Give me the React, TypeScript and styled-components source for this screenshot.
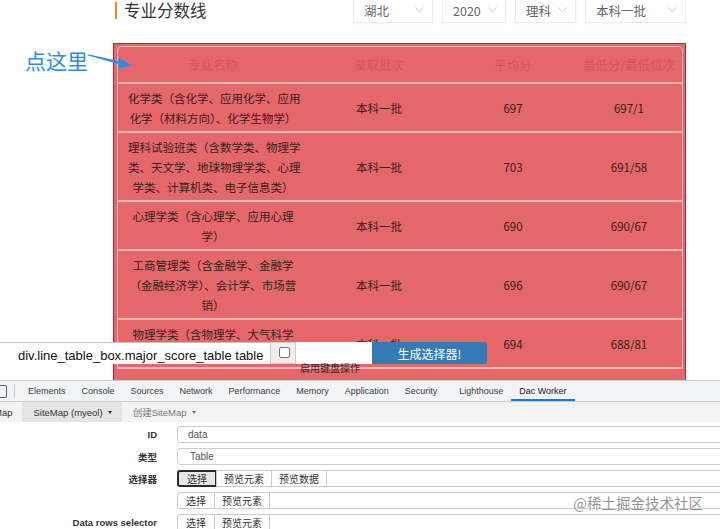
import React from 'react';
import styled, { createGlobalStyle } from 'styled-components';

const CJK = `"Microsoft YaHei", "Noto Sans CJK SC", sans-serif`;
const UI = `"Liberation Sans", Arial, "Noto Sans CJK SC", sans-serif`;

const GlobalStyle = createGlobalStyle`
  html, body {
    margin: 0;
    padding: 0;
    background: #fff;
  }
  body {
    font-family: ${CJK};
  }
`;

type ScoreRow = {
  major: string[];
  batch: string;
  avg: string;
  min: string;
};

const filters = [
  { label: '湖北', width: 80 },
  { label: '2020', width: 64 },
  { label: '理科', width: 61 },
  { label: '本科一批', width: 101 }
];

const rows: ScoreRow[] = [
  { major: ['化学类（含化学、应用化学、应用', '化学（材料方向）、化学生物学）'], batch: '本科一批', avg: '697', min: '697/1' },
  { major: ['理科试验班类（含数学类、物理学', '类、天文学、地球物理学类、心理', '学类、计算机类、电子信息类）'], batch: '本科一批', avg: '703', min: '691/58' },
  { major: ['心理学类（含心理学、应用心理', '学）'], batch: '本科一批', avg: '690', min: '690/67' },
  { major: ['工商管理类（含金融学、金融学', '（金融经济学）、会计学、市场营', '销）'], batch: '本科一批', avg: '696', min: '690/67' },
  { major: ['物理学类（含物理学、大气科学', '类）'], batch: '本科一批', avg: '694', min: '688/81' }
];

const tabs = ['Elements', 'Console', 'Sources', 'Network', 'Performance', 'Memory', 'Application', 'Security', 'Lighthouse', 'Dac Worker'];

const Page = styled.div`
  position: relative;
  width: 720px;
  height: 529px;
  overflow: hidden;
  display: flex;
  flex-direction: column;
  background: #fff;
`;

const Viewport = styled.div`
  position: relative;
  flex: 0 0 380px;
  overflow: hidden;
`;

const Content = styled.div`
  width: 573px;
  margin-left: 113px;
`;

const TitleRow = styled.div`
  display: flex;
  align-items: flex-start;
  height: 23px;
`;

const Title = styled.h2`
  margin: 2px 0 0 2px;
  padding-left: 7px;
  border-left: 2px solid #f5871f;
  height: 17px;
  line-height: 17px;
  font-family: ${CJK};
  font-size: 16.5px;
  font-weight: 400;
  color: #333;
`;

const Filters = styled.div`
  display: flex;
  gap: 9px;
  margin: -7px 0 0 auto;
`;

const Filter = styled.div<{ $w: number }>`
  width: ${p => p.$w}px;
  height: 30px;
  box-sizing: border-box;
  display: flex;
  align-items: flex-end;
  justify-content: space-between;
  padding: 0 8px 3px 10px;
  border: 1px solid #ececec;
  box-shadow: 0 1px 2px rgba(0, 0, 0, 0.04);
  font-family: ${CJK};
  font-size: 12.5px;
  line-height: 16px;
  color: #666;
`;

const Chevron = () => (
  <svg width="9" height="6" viewBox="0 0 9 6" style={{ marginBottom: 6 }}>
    <path d="M0.5 0.5 L4.5 5 L8.5 0.5" fill="none" stroke="#c4c4c4" strokeWidth="0.9" />
  </svg>
);

const TableBox = styled.div`
  margin-top: 20px;
  border: 1px solid #b8252c;
  padding: 2px 2px 30px 3px;
  background: #e4676a;
`;

const Grid = styled.table`
  width: 566px;
  table-layout: fixed;
  border-collapse: separate;
  border-spacing: 0;
  border: 1px solid rgba(255, 225, 225, 0.7);
  border-bottom: 2px solid #f3b8b8;
  border-radius: 5px 5px 0 0;
  font-family: ${CJK};
`;

const HeadCell = styled.th`
  height: 35px;
  padding: 0 4px;
  font-size: 12.5px;
  font-weight: 400;
  white-space: nowrap;
  color: rgba(150, 40, 44, 0.26);
  text-align: center;
`;

const Cell = styled.td`
  padding: 4px 10px 3px;
  border-top: 2px solid #f3b8b8;
  font-size: 11.5px;
  line-height: 20px;
  color: #3a2020;
  text-align: center;
  vertical-align: middle;
`;

const Line = styled.div`
  white-space: nowrap;
`;

const Callout = styled.div`
  position: absolute;
  left: 25px;
  top: 47px;
  display: flex;
  align-items: flex-start;
  font-family: ${CJK};
  font-size: 21px;
  line-height: 26px;
  color: #2b8de6;
`;

const SelectorBar = styled.div`
  position: absolute;
  left: 0;
  top: 342px;
  display: flex;
  flex-direction: column;
`;

const BarRow = styled.div`
  display: flex;
  height: 22px;
`;

const PathField = styled.div`
  width: 270px;
  box-sizing: border-box;
  background: #fff;
  border-top: 1px solid #b9c3cc;
  padding: 5px 0 0 18px;
  font-family: ${UI};
  font-size: 13px;
  line-height: 15px;
  color: #111;
  white-space: nowrap;
  overflow: hidden;
`;

const CheckCell = styled.div`
  width: 26px;
  box-sizing: border-box;
  background: #eee;
  border: 1px solid #ccc;
  padding: 4px 0 0 8px;
`;

const CheckBox = styled.span`
  display: block;
  width: 9px;
  height: 9px;
  border: 1px solid #767676;
  border-radius: 2px;
  background: #fff;
`;

const BlankField = styled.div`
  width: 76px;
  background: #fff;
`;

const GenerateButton = styled.div`
  width: 115px;
  display: flex;
  align-items: center;
  justify-content: center;
  background: #337ab7;
  border-radius: 0 3px 3px 0;
  font-family: ${CJK};
  font-size: 12px;
  color: #fff;
`;

const Hint = styled.div`
  padding-left: 300px;
  font-family: ${CJK};
  font-size: 10px;
  line-height: 10px;
  margin-top: -1px;
  color: #3a2525;
`;

const DevTools = styled.div`
  flex: 1;
  display: flex;
  flex-direction: column;
  background: #fff;
  font-family: ${UI};
`;

const TabBar = styled.div`
  height: 22px;
  box-sizing: border-box;
  display: flex;
  align-items: stretch;
  background: #f1f3f4;
  border-top: 1px solid #cbcdd1;
  border-bottom: 1px solid #cbcdd1;
`;

const InspectIcon = styled.span`
  align-self: center;
  width: 9px;
  height: 11px;
  margin-left: -4px;
  border: 1px solid #5f6368;
  border-radius: 2px;
`;

const Divider = styled.span`
  align-self: center;
  width: 1px;
  height: 14px;
  margin: 0 5px 0 7px;
  background: #cbcdd1;
`;

const Tab = styled.div<{ $active?: boolean; $spaced?: boolean }>`
  display: flex;
  align-items: center;
  padding: 0 8px;
  margin-left: ${p => (p.$spaced ? '6px' : '0')};
  font-size: 9px;
  color: ${p => (p.$active ? '#202124' : '#3c4043')};
  box-shadow: ${p => (p.$active ? 'inset 0 -2px 0 #1a73e8' : 'none')};
`;

const SubBar = styled.div`
  height: 20px;
  display: flex;
  align-items: stretch;
  background: #f3f3f3;
`;

const NavItem = styled.div<{ $active?: boolean; $muted?: boolean }>`
  display: flex;
  align-items: center;
  gap: 5px;
  padding: 0 10px 0 11px;
  font-family: ${UI};
  font-size: 9.5px;
  color: ${p => (p.$muted ? '#777' : '#333')};
  background: ${p => (p.$active ? '#e4e4e4' : 'transparent')};
  &:first-child {
    margin-left: -6px;
    padding: 0 10px 0 0;
  }
`;

const Caret = styled.span`
  width: 0;
  height: 0;
  border-top: 3px solid currentColor;
  border-left: 2.5px solid transparent;
  border-right: 2.5px solid transparent;
`;

const Form = styled.div`
  display: flex;
  flex-direction: column;
  gap: 5px;
  padding-top: 4px;
`;

const FormRow = styled.div`
  display: flex;
  align-items: center;
  height: 17px;
`;

const Label = styled.div`
  width: 157px;
  margin-right: 20px;
  text-align: right;
  font-family: ${UI};
  font-size: 9.5px;
  font-weight: 700;
  color: #333;
  white-space: nowrap;
`;

const Field = styled.div<{ $indent?: number }>`
  flex: 1;
  height: 17px;
  box-sizing: border-box;
  margin-right: -6px;
  padding-left: ${p => p.$indent ?? 10}px;
  display: flex;
  align-items: center;
  border: 1px solid #ccc;
  border-radius: 3px;
  font-family: ${UI};
  font-size: 10px;
  color: #555;
`;

const ButtonGroup = styled.div`
  flex: 1;
  display: flex;
  height: 17px;
  margin-right: -6px;
`;

const GroupButton = styled.div<{ $focused?: boolean }>`
  display: flex;
  align-items: center;
  box-sizing: border-box;
  padding: 0 7px;
  margin-right: -1px;
  border: ${p => (p.$focused ? '2px solid #2b2b2b' : '1px solid #ccc')};
  border-radius: ${p => (p.$focused ? '3px' : '0')};
  background: ${p => (p.$focused ? '#e6e6e6' : '#fff')};
  font-family: ${CJK};
  font-size: 10px;
  color: #333;
  &:first-child {
    border-radius: 3px 0 0 3px;
    padding: 0 8px;
  }
`;

const GroupField = styled.div`
  flex: 1;
  border: 1px solid #ccc;
  border-radius: 0 3px 3px 0;
`;

const Watermark = styled.div`
  position: absolute;
  right: 17px;
  bottom: 16px;
  font-family: ${CJK};
  font-size: 14.5px;
  color: rgba(120, 120, 120, 0.8);
  text-shadow: 0 0 1px #fff;
`;

const SelectorButtons: React.FC<{ preview?: boolean; focused?: boolean }> = ({ preview, focused }) => (
  <ButtonGroup>
    <GroupButton $focused={focused}>选择</GroupButton>
    <GroupButton>预览元素</GroupButton>
    {preview && <GroupButton>预览数据</GroupButton>}
    <GroupField />
  </ButtonGroup>
);

export default function App() {
  return (
    <>
      <GlobalStyle />
      <Page>
        <Viewport>
          <Content>
            <TitleRow>
              <Title>专业分数线</Title>
              <Filters>
                {filters.map(f => (
                  <Filter key={f.label} $w={f.width}>
                    <span>{f.label}</span>
                    <Chevron />
                  </Filter>
                ))}
              </Filters>
            </TitleRow>

            <TableBox>
              <Grid>
                <colgroup>
                  <col style={{ width: 190 }} />
                  <col style={{ width: 142 }} />
                  <col style={{ width: 126 }} />
                  <col style={{ width: 106 }} />
                </colgroup>
                <thead>
                  <tr>
                    <HeadCell>专业名称</HeadCell>
                    <HeadCell>录取批次</HeadCell>
                    <HeadCell>平均分</HeadCell>
                    <HeadCell>最低分/最低位次</HeadCell>
                  </tr>
                </thead>
                <tbody>
                  {rows.map(r => (
                    <tr key={r.major[0]}>
                      <Cell>
                        {r.major.map(l => (
                          <Line key={l}>{l}</Line>
                        ))}
                      </Cell>
                      <Cell>{r.batch}</Cell>
                      <Cell>{r.avg}</Cell>
                      <Cell>{r.min}</Cell>
                    </tr>
                  ))}
                </tbody>
              </Grid>
            </TableBox>
          </Content>

          <Callout>
            点这里
            <svg width="46" height="22" viewBox="0 0 46 22" style={{ marginTop: 5 }}>
              <polygon points="0,2.2 33,9.6 32.4,12.6 0,3.6" fill="#2b8de6" />
              <polygon points="31,5.5 44,13.5 30,17" fill="#2b8de6" />
            </svg>
          </Callout>

          <SelectorBar>
            <BarRow>
              <PathField>div.line_table_box.major_score_table table</PathField>
              <CheckCell>
                <CheckBox />
              </CheckCell>
              <BlankField />
              <GenerateButton>生成选择器!</GenerateButton>
            </BarRow>
            <Hint>启用键盘操作</Hint>
          </SelectorBar>
        </Viewport>

        <DevTools>
          <TabBar>
            <InspectIcon />
            <Divider />
            {tabs.map(t => (
              <Tab key={t} $active={t === 'Dac Worker'} $spaced={t === 'Lighthouse'}>
                {t}
              </Tab>
            ))}
          </TabBar>
          <SubBar>
            <NavItem>Map</NavItem>
            <NavItem $active>
              SiteMap (myeol) <Caret />
            </NavItem>
            <NavItem $muted>
              创建SiteMap <Caret />
            </NavItem>
          </SubBar>
          <Form>
            <FormRow>
              <Label>ID</Label>
              <Field>data</Field>
            </FormRow>
            <FormRow>
              <Label>类型</Label>
              <Field $indent={12}>Table</Field>
            </FormRow>
            <FormRow>
              <Label>选择器</Label>
              <SelectorButtons preview focused />
            </FormRow>
            <FormRow>
              <Label />
              <SelectorButtons />
            </FormRow>
            <FormRow>
              <Label>Data rows selector</Label>
              <SelectorButtons />
            </FormRow>
          </Form>
        </DevTools>

        <Watermark>@稀土掘金技术社区</Watermark>
      </Page>
    </>
  );
}
